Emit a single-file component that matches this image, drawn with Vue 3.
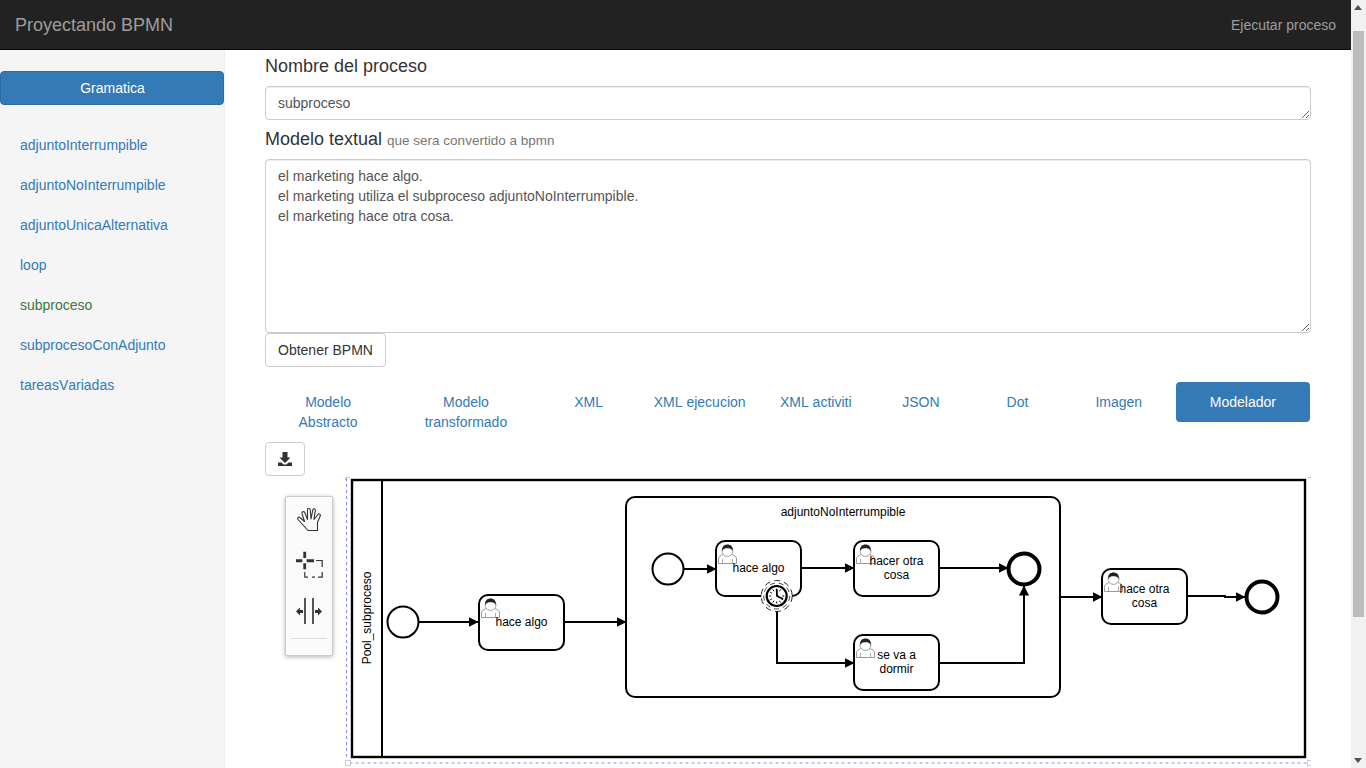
<template>
  <div class="page">
    <div class="content">
      <nav class="navbar">
        <a class="brand">Proyectando BPMN</a>
        <a class="nav-link">Ejecutar proceso</a>
      </nav>
      <div class="layout">
        <aside class="sidebar">
          <button class="btn-primary">Gramatica</button>
          <ul class="side-list">
            <li v-for="g in gramaticas" :key="g" :class="{ current: g === 'subproceso' }">{{ g }}</li>
          </ul>
        </aside>
        <main class="main">
          <h4>Nombre del proceso</h4>
          <textarea class="form-control" rows="1" :value="nombre"></textarea>
          <h4 class="modelo-title">Modelo textual <small>que sera convertido a bpmn</small></h4>
          <textarea class="form-control modelo" rows="8" :value="modelo"></textarea>
          <button class="btn">Obtener BPMN</button>
          <ul class="tabs">
            <li v-for="t in tabs" :key="t" :class="{ active: t === 'Modelador' }"><a>{{ t }}</a></li>
          </ul>
          <button class="btn btn-icon">
            <svg width="14" height="14" viewBox="0 0 14 14">
              <path d="M4.500 0h5v5.500h3L7 11 1.500 5.500h3z" fill="#333" />
              <path d="M0 10.500h3.500L5.500 12.500h3l2-2H14V14H0z" fill="#333" />
            </svg>
          </button>
          <div class="modeler">
            <svg class="canvas" width="1046" height="292" viewBox="265 476 1046 292">
              <defs>
                <marker id="arrow" markerWidth="10" markerHeight="10" refX="9.500" refY="5" orient="auto" markerUnits="userSpaceOnUse">
                  <path d="M0 0L10 5L0 10z" fill="#000" />
                </marker>
                <g id="user">
                  <path d="M0.500 19.500V15C0.500 12.500 2.500 11.500 5.500 10.500C4.200 9 4 7.500 4.200 6C4.600 3 6.800 1.500 9.500 1.500C12.200 1.500 14.400 3 14.800 6C15 7.500 14.800 9 13.500 10.500C16.500 11.500 18.500 12.500 18.500 15V19.500z" fill="#fff" stroke="#999" stroke-width="1" />
                  <path d="M4.500 19.500V15M14.500 19.500V15" stroke="#aaa" stroke-width="1" fill="none" />
                  <path d="M5.500 10.500C7 13 12 13 13.500 10.500" stroke="#999" stroke-width="1" fill="none" />
                  <path d="M4.400 7C3.500 2.500 6.500 0.500 9.500 0.500C12.500 0.500 15.500 2.500 14.600 7C13.500 4.700 12 4.300 9.500 4.300C7 4.300 5.500 4.700 4.400 7z" fill="#222" />
                </g>
              </defs>

              <!-- seleccion del lienzo -->
              <path d="M346.500 478V763H1307" fill="none" stroke="#8a8aff" stroke-width="1" stroke-dasharray="3 3" />
              <rect x="345.500" y="760.500" width="5" height="5" fill="#fff" stroke="#ccc" />
              <rect x="1307.500" y="760.500" width="5" height="5" fill="#fff" stroke="#ccc" />
              <path d="M345.500 480V477.500H350M1307.500 477.500H1312V480" fill="none" stroke="#ccc" />

              <!-- pool -->
              <rect x="352" y="480" width="953" height="277" fill="#fff" stroke="#000" stroke-width="2.400" />
              <path d="M382 480V757" stroke="#000" stroke-width="2" />
              <text class="label" transform="translate(370.500 618) rotate(-90)" text-anchor="middle">Pool_subproceso</text>

              <!-- subproceso -->
              <rect x="626" y="497" width="434" height="200" rx="9" fill="#fff" stroke="#000" stroke-width="2" />
              <text class="label" x="843" y="516" text-anchor="middle">adjuntoNoInterrumpible</text>

              <!-- flujos -->
              <g fill="none" stroke="#000" stroke-width="2">
                <path d="M419 622H478" marker-end="url(#arrow)" />
                <path d="M565 622H626" marker-end="url(#arrow)" />
                <path d="M684 569H716" marker-end="url(#arrow)" />
                <path d="M801 568H854" marker-end="url(#arrow)" />
                <path d="M939 568H1008" marker-end="url(#arrow)" />
                <path d="M777 610V663H854" marker-end="url(#arrow)" />
                <path d="M939 663H1024V586" marker-end="url(#arrow)" />
                <path d="M1060 597H1102" marker-end="url(#arrow)" />
                <path d="M1187 596H1225V597H1245" marker-end="url(#arrow)" />
              </g>

              <!-- eventos -->
              <g fill="#fff" stroke="#000">
                <circle cx="403" cy="622" r="15.500" stroke-width="2" />
                <circle cx="668" cy="569" r="15.500" stroke-width="2" />
                <circle cx="1024" cy="569" r="15.500" stroke-width="4" />
                <circle cx="1262" cy="597" r="15.500" stroke-width="4" />
              </g>

              <!-- tareas -->
              <g v-for="t in tareas" :key="t.x + '-' + t.y">
                <rect :x="t.x" :y="t.y" width="85" height="55" rx="9" fill="#fff" stroke="#000" stroke-width="2" />
                <use href="#user" :x="t.x + 2" :y="t.y + 3" />
                <text v-for="(l, i) in t.lines" :key="l" class="label" :x="t.x + 42.500" :y="t.y + t.top + i * 14" text-anchor="middle">{{ l }}</text>
              </g>

              <!-- evento de tiempo -->
              <g>
                <circle cx="776.700" cy="596" r="15.500" fill="#fff" stroke="#222" stroke-width="1" stroke-dasharray="6 4" />
                <circle cx="776.700" cy="596" r="13" fill="#fff" stroke="#444" stroke-width="1" stroke-dasharray="5 4" />
                <circle cx="776.700" cy="596" r="10" fill="#fff" stroke="#000" stroke-width="2.200" />
                <path d="M776.700 588.500v2M776.700 601.500v2M769.200 596h2M782.200 596h2M772.900 589.500l1 1.700M780.500 589.500l-1 1.700M770.200 592.200l1.700 1M770.200 599.800l1.700-1M772.900 602.500l1-1.700M780.500 602.500l-1-1.700M783.200 599.800l-1.700-1" stroke="#000" stroke-width="1" fill="none" />
                <path d="M776.700 589L777 596L783 599" stroke="#000" stroke-width="1.800" fill="none" />
              </g>
            </svg>

            <div class="palette">
              <svg width="28" height="26" viewBox="0 0 28 26">
                <path transform="translate(1 0)" d="M12 24.500L2 13.500C1 12 2.500 10.500 4 11.500L8.500 15.500L6 7.500C5.500 5.500 8 5 8.800 6.500L11.500 13.500L11.500 3.500C11.500 1.800 14 1.800 14.200 3.500L15 13L16.800 3.800C17.200 2.200 19.600 2.500 19.300 4.300L18 13.500L22 8.500C23 7.200 25 8.300 24.200 10L21.500 16.500L21.500 24.500z" fill="none" stroke="#333" stroke-width="1.100" stroke-linejoin="round" />
              </svg>
              <svg width="28" height="28" viewBox="0 0 28 28">
                <path d="M1 9.200H7.300V12.200H1zM11.700 9.200H19V12.200H11.700zM8.300 1.700H11.100V8H8.300zM8.300 13.300H11.100V19.300H8.300z" fill="#333" />
                <path d="M21 10.500H27.200V17M27.200 22V27.200H23M20 27.200H17M13 27.200H9.800V22" fill="none" stroke="#333" stroke-width="1.200" />
              </svg>
              <svg width="28" height="28" viewBox="0 0 28 28">
                <path d="M10 2V28M18 2V28" stroke="#555" stroke-width="2" fill="none" />
                <path d="M1 15.500L5 11.500V14H8V17H5V19.500zM27 15.500L23 11.500V14H20V17H23V19.500z" fill="#333" />
              </svg>
              <hr class="sep" />
            </div>
          </div>
        </main>
      </div>
    </div>
    <div class="scrollbar">
      <span class="arrow up"></span>
      <span class="thumb"></span>
      <span class="arrow down"></span>
    </div>
  </div>
</template>

<script setup>
const gramaticas = [
  'adjuntoInterrumpible',
  'adjuntoNoInterrumpible',
  'adjuntoUnicaAlternativa',
  'loop',
  'subproceso',
  'subprocesoConAdjunto',
  'tareasVariadas'
]
const tabs = ['Modelo Abstracto', 'Modelo transformado', 'XML', 'XML ejecucion', 'XML activiti', 'JSON', 'Dot', 'Imagen', 'Modelador']
const nombre = 'subproceso'
const modelo = 'el marketing hace algo.\nel marketing utiliza el subproceso adjuntoNoInterrumpible.\nel marketing hace otra cosa.'
const tareas = [
  { x: 479, y: 595, top: 31, lines: ['hace algo'] },
  { x: 716, y: 541, top: 31, lines: ['hace algo'] },
  { x: 854, y: 541, top: 24, lines: ['hacer otra', 'cosa'] },
  { x: 854, y: 635, top: 24, lines: ['se va a', 'dormir'] },
  { x: 1102, y: 569, top: 24, lines: ['hace otra', 'cosa'] }
]
</script>

<style>
html, body {
  margin: 0;
  height: 768px;
  overflow: hidden;
}
</style>

<style scoped>
* {
  box-sizing: border-box;
}
.page {
  display: flex;
  height: 768px;
  overflow: hidden;
  font-family: "Liberation Sans", Arial, sans-serif;
  font-size: 14px;
  line-height: 20px;
  font-kerning: none;
  color: #333;
  background: #fff;
}
.content {
  flex: 1;
  min-width: 0;
}
.navbar {
  height: 50px;
  background: #222;
  border-bottom: 1px solid #080808;
  display: flex;
  align-items: center;
  justify-content: space-between;
  padding: 0 15px;
  color: #9d9d9d;
}
.brand {
  font-size: 18px;
}
.layout {
  display: flex;
  height: 718px;
}
.sidebar {
  width: 225px;
  flex: none;
  padding-top: 21px;
  background: #f5f5f5;
  border-right: 1px solid #eee;
}
.btn-primary {
  display: block;
  width: 224px;
  height: 34px;
  padding: 0 0 0 1px;
  font: inherit;
  font-kerning: none;
  color: #fff;
  background: #337ab7;
  border: 1px solid #2e6da4;
  border-radius: 4px;
}
.side-list {
  list-style: none;
  margin: 20px 0 0;
  padding: 0;
  color: #337ab7;
}
.side-list li {
  padding: 10px 20px;
}
.side-list .current {
  color: #3c763d;
}
.main {
  flex: 1;
  min-width: 0;
  padding: 7px 40px 0;
}
h4 {
  font-size: 18px;
  font-weight: 500;
  line-height: 19.800px;
  margin: 0 0 9px;
}
.modelo-title {
  margin: 10px 0 8px;
}
small {
  font-size: 13.500px;
  font-weight: 400;
  color: #777;
}
.form-control {
  display: block;
  width: 100%;
  padding: 6px 12px;
  font: inherit;
  font-kerning: none;
  line-height: 20px;
  color: #555;
  background: #fff;
  border: 1px solid #ccc;
  border-radius: 4px;
  box-shadow: inset 0 1px 1px rgba(0, 0, 0, .075);
}
.btn {
  display: block;
  height: 34px;
  padding: 6px 12px;
  font: inherit;
  font-kerning: none;
  color: #333;
  background: #fff;
  border: 1px solid #ccc;
  border-radius: 4px;
}
.btn-icon {
  width: 40px;
  display: flex;
  align-items: center;
  justify-content: center;
}
.tabs {
  display: table;
  width: calc(100% - 1px);
  list-style: none;
  margin: 15px 0 0;
  padding: 0;
}
.tabs li {
  display: table-cell;
  width: 1%;
  vertical-align: top;
}
.tabs a {
  display: block;
  padding: 10px 15px;
  text-align: center;
  color: #337ab7;
  border-radius: 4px;
}
.tabs .active a {
  padding: 10px 15.500px;
  color: #fff;
  background: #337ab7;
}
.modeler {
  position: relative;
  height: 292px;
}
.canvas {
  display: block;
}
.label {
  font-family: "Liberation Sans", Arial, sans-serif;
  font-size: 12px;
  fill: #000;
}
.palette {
  position: absolute;
  left: 20px;
  top: 20px;
  width: 48px;
  height: 160px;
  padding-top: 9px;
  display: flex;
  flex-direction: column;
  align-items: center;
  gap: 18px;
  background: #fafafa;
  border: 1px solid #ccc;
  border-radius: 2px;
  box-shadow: 0 1px 4px rgba(0, 0, 0, .3);
}
.palette svg {
  display: block;
  flex: none;
}
.sep {
  width: 36px;
  margin: -4px 0 0;
  border: 0;
  border-top: 1px solid #ddd;
}
.scrollbar {
  width: 15px;
  flex: none;
  position: relative;
  background: #f1f1f1;
  padding: 31px 2px 0;
}
.thumb {
  display: block;
  height: 586px;
  background: #bcbcbc;
}
.arrow {
  position: absolute;
  left: 3px;
  width: 0;
  height: 0;
  border-left: 4px solid transparent;
  border-right: 4px solid transparent;
}
.up {
  top: 5px;
  border-bottom: 5px solid #505050;
}
.down {
  bottom: 5px;
  border-top: 5px solid #505050;
}
</style>
